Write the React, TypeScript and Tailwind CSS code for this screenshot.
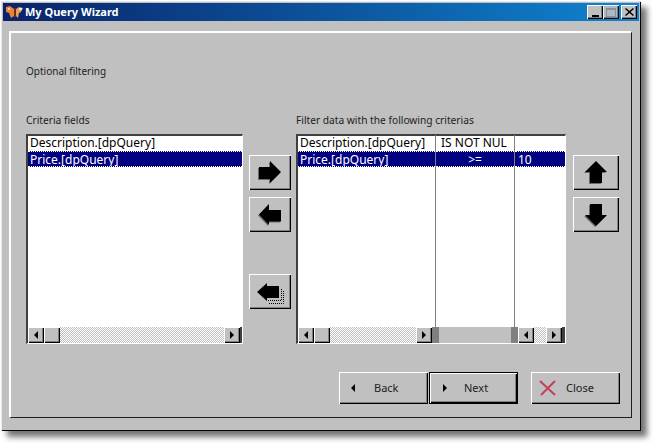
import type { ReactNode } from 'react'

const raised = 'bg-[#c0c0c0] shadow-[inset_1px_1px_0_#ffffff,inset_-1px_-1px_0_#000000,inset_-2px_-2px_0_#808080]'

type Dir = 'right' | 'left' | 'up' | 'down'

const arrowPoints: Record<Dir, string> = {
  right: '1,7 12,7 12,1 23,12 12,23 12,19 1,19',
  left: '23,8 11,8 11,2 1,12.5 11,23 11,19.5 23,19.5',
  up: '12,1 23,12 18,12 18,23 6,23 6,12 1,12',
  down: '6,2 18,2 18,13 23,13 12,24 1,13 6,13',
}

function ArrowIcon({ dir }: { dir: Dir }) {
  return (
    <svg width="24" height="25" viewBox="0 0 24 25">
      <polygon points={arrowPoints[dir]} fill="#6a6a6a" transform="translate(-1 1)" />
      <polygon points={arrowPoints[dir]} fill="#000000" />
    </svg>
  )
}

function AllLeftIcon() {
  return (
    <svg width="28" height="24" viewBox="0 0 28 24">
      <path d="M12 20.5H25.5V9" fill="none" stroke="#000" strokeDasharray="1 1" />
      <path d="M13 23.5H27.5V11" fill="none" stroke="#000" strokeDasharray="1 1" />
      <polygon points="1,12 11,3 11,6 23,6 23,18 11,18 11,21" fill="#000" />
    </svg>
  )
}

function IconButton({ children }: { children: ReactNode }) {
  return <div className={`${raised} flex h-[35px] items-center justify-center`}>{children}</div>
}

function SmallTriangle({ dir }: { dir: 'left' | 'right' }) {
  return (
    <svg width="4" height="8" viewBox="0 0 4 8" className="block">
      <polygon points={dir === 'left' ? '4,0 4,8 0,4' : '0,0 0,8 4,4'} fill="#000" />
    </svg>
  )
}

function ScrollArrow({ dir }: { dir: 'left' | 'right' }) {
  return (
    <div className={`${raised} flex h-4 w-4 shrink-0 items-center justify-center`}>
      <SmallTriangle dir={dir} />
    </div>
  )
}

function Track({ thumb = false, grow = true }: { thumb?: boolean; grow?: boolean }) {
  return (
    <>
      {thumb && <div className={`${raised} h-4 w-4 shrink-0`} />}
      <div className={`h-4 bg-[repeating-conic-gradient(#ffffff_0%_25%,#c0c0c0_0%_50%)] bg-size-[2px_2px] ${grow ? 'flex-1' : 'w-3'}`} />
    </>
  )
}

function ListBox({ className, children }: { className: string; children: ReactNode }) {
  return (
    <div className={`${className} flex h-[210px] shrink-0 flex-col border-t-2 border-r border-b border-l-2 border-t-[#404040] border-r-white border-b-white border-l-[#404040] bg-white`}>
      {children}
    </div>
  )
}

function TextCell({ children, selected = false, className = '' }: { children?: ReactNode; selected?: boolean; className?: string }) {
  return (
    <div
      className={`h-4 overflow-hidden text-[12px] leading-[15px] whitespace-nowrap ${
        selected ? 'border-y border-dotted border-white bg-[#000080] leading-[13px] text-white' : 'text-black'
      } ${className}`}
    >
      {children}
    </div>
  )
}

function WizardButton({ label, icon, isDefault = false, className = '' }: { label: string; icon: ReactNode; isDefault?: boolean; className?: string }) {
  return (
    <div
      className={`${
        isDefault
          ? 'bg-[#c0c0c0] shadow-[inset_0_0_0_1px_#000000,inset_2px_2px_0_#ffffff,inset_-2px_-2px_0_#000000,inset_-3px_-3px_0_#808080]'
          : raised
      } flex h-8 w-[89px] shrink-0 items-center text-[11px] text-[#202020] ${className}`}
    >
      <div className="w-[35px]">{icon}</div>
      <span>{label}</span>
    </div>
  )
}

function CaptionButton({ children, muted = false }: { children: ReactNode; muted?: boolean }) {
  return (
    <div className={`${raised} flex h-[14px] w-4 items-center justify-center ${muted ? 'opacity-90' : ''}`}>
      {children}
    </div>
  )
}

export default function App() {
  return (
    <div className="h-[443px] w-[653px] overflow-hidden bg-white pt-px pl-px font-['Noto_Sans',sans-serif]">
      <div className="flex h-[430px] w-[640px] flex-col bg-[#c0c0c0] px-[2px] pt-[2px] shadow-[inset_1px_1px_0_#e8e8e8,inset_-1px_-1px_0_#000000,6px_6px_6px_rgba(0,0,0,0.55)]">
        {/* title bar */}
        <div className="flex h-[18px] shrink-0 items-center bg-linear-to-r from-[#0a246a] to-[#1084d0] pr-[2px] pl-[3px]">
          <svg width="17" height="14" viewBox="0 0 17 14" className="shrink-0">
            <path d="M0 2 4 1 8 4V11L5 13 3 8 0 7Z" fill="#e8843c" />
            <path d="M2 3H4V5H2Z" fill="#ffd0a0" />
            <path d="M10 4 13 2 17 3 15 7 13 8 12 13 10 11Z" fill="#e8a060" />
            <path d="M13 3H16V5H13Z" fill="#e8e8f0" />
            <path d="M8 3H10V12H8Z" fill="#6a3010" />
          </svg>
          <span className="ml-[2px] text-[11px] font-bold text-white">My Query Wizard</span>
          <div className="ml-auto flex">
            <CaptionButton>
              <div className="mt-[7px] h-[2px] w-[7px] bg-black" />
            </CaptionButton>
            <CaptionButton muted>
              <div className="h-[9px] w-[10px] border border-t-2 border-[#808080] opacity-70" />
            </CaptionButton>
            <div className="ml-[2px]">
              <CaptionButton>
                <svg width="9" height="8" viewBox="0 0 9 8">
                  <path d="M1 0 4.5 3 8 0 9 1 5.5 4 9 7 8 8 4.5 5 1 8 0 7 3.5 4 0 1Z" fill="#000" />
                </svg>
              </CaptionButton>
            </div>
          </div>
        </div>

        {/* wizard panel */}
        <div className="mt-[10px] ml-[6px] flex h-[387px] w-[623px] flex-col border-t-2 border-r border-b border-l-2 border-t-white border-r-[#202020] border-b-[#202020] border-l-white pt-[31px] pl-[15px]">
          <div className="h-[14px] text-[10px] leading-[14px] text-[#202020]">Optional filtering</div>

          <div className="mt-[35px] flex h-[14px] text-[10.2px] leading-[14px] text-[#202020]">
            <span className="w-[270px]">Criteria fields</span>
            <span>Filter data with the following criterias</span>
          </div>

          <div className="mt-[7px] flex">
            <ListBox className="w-[217px]">
              <div className="-mt-px flex-1">
                <TextCell className="pl-[2px]">Description.[dpQuery]</TextCell>
                <TextCell className="pl-[2px]" selected>Price.[dpQuery]</TextCell>
              </div>
              <div className="flex h-4 w-[214px]">
                <ScrollArrow dir="left" />
                <Track thumb />
                <ScrollArrow dir="right" />
                <div className="w-[2px] bg-[#404040]" />
              </div>
            </ListBox>

            <div className="ml-[6px] flex w-[42px] shrink-0 flex-col pt-[21px]">
              <IconButton><ArrowIcon dir="right" /></IconButton>
              <div className="mt-[7px]"><IconButton><ArrowIcon dir="left" /></IconButton></div>
              <div className="mt-[42px]"><IconButton><AllLeftIcon /></IconButton></div>
            </div>

            <ListBox className="ml-[5px] w-[270px]">
              <div className="-mt-px flex flex-1">
                <div className="w-[138px] border-r border-[#808080]">
                  <TextCell className="pl-[2px]">Description.[dpQuery]</TextCell>
                  <TextCell className="pl-[2px]" selected>Price.[dpQuery]</TextCell>
                </div>
                <div className="w-[79px] border-r border-[#808080]">
                  <TextCell className="pl-[5px]">IS NOT NUL</TextCell>
                  <TextCell className="text-center" selected>&gt;=</TextCell>
                </div>
                <div className="w-[50px]">
                  <TextCell className="pl-[3px]" />
                  <TextCell className="pl-[3px]" selected>10</TextCell>
                </div>
              </div>
              <div className="flex h-4 w-[267px]">
                <ScrollArrow dir="left" />
                <Track thumb />
                <ScrollArrow dir="right" />
                <div className="w-[7px] bg-[#808080]" />
                <div className="w-[72px] bg-[#c0c0c0]" />
                <div className="w-[7px] bg-[#808080]" />
                <ScrollArrow dir="left" />
                <Track grow={false} />
                <ScrollArrow dir="right" />
                <div className="w-[3px] bg-[#404040]" />
              </div>
            </ListBox>

            <div className="ml-[7px] flex w-[46px] shrink-0 flex-col pt-[21px]">
              <IconButton><ArrowIcon dir="up" /></IconButton>
              <div className="mt-[7px]"><IconButton><ArrowIcon dir="down" /></IconButton></div>
            </div>
          </div>

          {/* footer buttons */}
          <div className="mt-[28px] ml-[313px] flex">
            <WizardButton label="Back" icon={<div className="pl-3"><SmallTriangle dir="left" /></div>} />
            <WizardButton label="Next" isDefault icon={<div className="pl-[14px]"><SmallTriangle dir="right" /></div>} className="ml-px" />
            <WizardButton
              label="Close"
              className="ml-[13px]"
              icon={
                <svg width="18" height="16" viewBox="0 0 18 16" className="ml-2">
                  <path d="M1 1 L16 15 M16 1 L2 15" stroke="#c4405a" strokeWidth="2" fill="none" />
                </svg>
              }
            />
          </div>
        </div>
      </div>
    </div>
  )
}
